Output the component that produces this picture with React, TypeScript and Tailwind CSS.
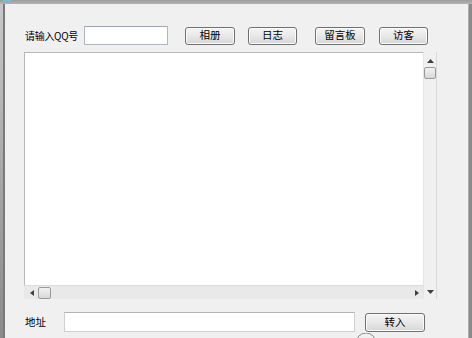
import React from "react";

const font = { fontFamily: '"Noto Sans CJK SC", "Liberation Sans", sans-serif' };

function Btn({ label, w, className = "" }: { label: string; w: string; className?: string }) {
  return (
    <div
      className={`${w} h-[18px] rounded-[3px] border border-[#707070] bg-gradient-to-b from-[#f4f4f4] via-[#e8e8e8] to-[#d6d6d6] flex items-center justify-center text-[10.5px] leading-none text-black shadow-[inset_0_0_0_1px_#fbfbfb] ${className}`}
    >
      {label}
    </div>
  );
}

export default function App() {
  return (
    <div className="w-[472px] h-[338px] relative overflow-hidden bg-[#f0f0f0] flex flex-col" style={font}>
      <div className="h-[4px] bg-gradient-to-b from-[#9c9c9c] to-[#b4b4b4] flex">
        <div className="ml-[3px] w-[8px] h-[1px] bg-[#6fc3e0]" />
      </div>
      <div className="flex flex-1">
        <div className="w-[5px] flex">
          <div className="w-[3px] bg-gradient-to-b from-[#c8c8c8] via-[#a8a8a8] to-[#8a8a8a]" />
          <div className="w-[2px] bg-[#7a7a7a]" />
        </div>
        <div className="flex-1 flex flex-col">
          {/* row 1 */}
          <div className="mt-[22px] h-[19px] flex items-center">
            <div className="ml-[20px] w-[59px] text-[10px] tracking-[-0.3px] leading-none text-black">请输入QQ号</div>
            <div className="w-[84px] h-[19px] border border-[#abb6c4] border-t-[#9aa7b8] bg-white rounded-[1px]" />
            <Btn label="相册" w="w-[50px]" className="ml-[17px]" />
            <Btn label="日志" w="w-[49px]" className="ml-[13px]" />
            <Btn label="留言板" w="w-[50px]" className="ml-[18px]" />
            <Btn label="访客" w="w-[49px]" className="ml-[14px]" />
          </div>
          {/* panel */}
          <div className="mt-[7px] ml-[19px] flex h-[247px]">
            <div className="w-[399px] flex flex-col">
              <div className="h-[233px] bg-white border-t border-l border-[#b8b8b8]" />
              <div className="h-[14px] bg-[#e9e9e9] border-t border-[#dcdcdc] flex items-center relative">
                <svg width="4" height="6" className="ml-[6px]" viewBox="0 0 4 6">
                  <path d="M4 0 L0 3 L4 6 Z" fill="#404040" />
                </svg>
                <div className="ml-[4px] w-[13px] h-[12px] rounded-[2px] border border-[#9a9a9a] bg-gradient-to-b from-[#f2f2f2] to-[#d8d8d8]" />
                <div className="flex-1" />
                <svg width="4" height="6" className="mr-[4px]" viewBox="0 0 4 6">
                  <path d="M0 0 L4 3 L0 6 Z" fill="#404040" />
                </svg>
              </div>
            </div>
            <div className="w-[14px] flex flex-col items-center border-r border-[#dadada] border-l border-l-[#e4e4e4]">
              <svg width="7" height="4" className="mt-[7px]" viewBox="0 0 7 4">
                <path d="M0 4 L3.5 0 L7 4 Z" fill="#404040" />
              </svg>
              <div className="mt-[4px] w-[12px] h-[12px] rounded-[2px] border border-[#9a9a9a] bg-gradient-to-b from-[#f2f2f2] to-[#d8d8d8]" />
              <div className="flex-1" />
              <svg width="7" height="4" className="mb-[5px]" viewBox="0 0 7 4">
                <path d="M0 0 L3.5 4 L7 0 Z" fill="#404040" />
              </svg>
            </div>
          </div>
          {/* row 3 */}
          <div className="mt-[13px] h-[20px] flex items-center">
            <div className="ml-[20px] w-[39px] text-[10.5px] leading-none text-black">地址</div>
            <div className="w-[291px] h-[20px] border border-[#cfcfcf] border-t-[#b4b4b4] bg-white" />
            <Btn label="转入" w="w-[60px]" className="ml-[10px] h-[19px]" />
          </div>
        </div>
        <div className="w-[4px] flex">
          <div className="w-[1px] bg-[#b0b0b0]" />
          <div className="w-[3px] bg-[#8a8a8a]" />
        </div>
      </div>
      <svg className="absolute left-[354px] top-[333px]" width="24" height="10" viewBox="0 0 24 10">
        <path d="M2 10 A10 10 0 0 1 22 10" fill="none" stroke="#8a8a8a" strokeWidth="1" />
      </svg>
    </div>
  );
}
